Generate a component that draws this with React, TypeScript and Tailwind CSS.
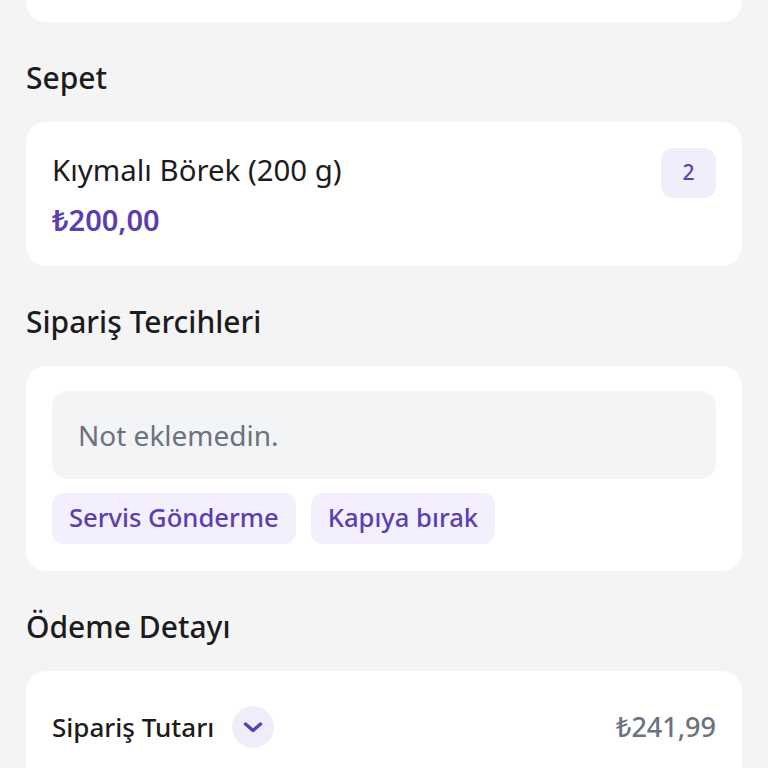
const font = { fontFamily: '"Noto Sans", "Open Sans", sans-serif' };

function Heading({ children }: { children: string }) {
  return (
    <h2 className="pt-[38px] pb-[26px] text-[30px] leading-[36px] font-medium text-[#1c1c1e]">
      {children}
    </h2>
  );
}

export default function App() {
  return (
    <div className="min-h-screen bg-[#f4f4f5] px-[26px] overflow-hidden" style={font}>
      {/* önceki kart (üstte kesik) */}
      <div className="h-[22px] bg-white rounded-b-[20px]" />

      <Heading>Sepet</Heading>
      <div className="bg-white rounded-[20px] px-[26px] pt-[26px] pb-[28px] flex items-start justify-between">
        <div className="pt-[4px]">
          <p className="text-[29.4px] leading-[36px] text-[#1c1c1e]">Kıymalı Börek (200 g)</p>
          <p className="mt-[14px] text-[29px] leading-[36px] font-semibold text-[#5b3fb0]">₺200,00</p>
        </div>
        <div className="w-[55px] h-[50px] rounded-[12px] bg-[#f1eefb] flex items-center justify-center text-[21px] font-medium text-[#5b3fb0]">
          2
        </div>
      </div>

      <Heading>Sipariş Tercihleri</Heading>
      <div className="bg-white rounded-[20px] px-[26px] pt-[25px] pb-[27px]">
        <div className="h-[88px] rounded-[16px] bg-[#f3f4f6] px-[26px] flex items-center text-[28px] text-[#6b7280]">
          Not eklemedin.
        </div>
        <div className="mt-[14px] flex gap-[15px]">
          <span className="h-[51px] px-[17px] rounded-[12px] bg-[#f3effd] flex items-center text-[25.6px] font-medium text-[#5b3fb0]">
            Servis Gönderme
          </span>
          <span className="h-[51px] px-[17px] rounded-[12px] bg-[#f3effd] flex items-center text-[25.6px] font-medium text-[#5b3fb0]">
            Kapıya bırak
          </span>
        </div>
      </div>

      <Heading>Ödeme Detayı</Heading>
      <div className="bg-white rounded-[20px] px-[26px] pt-[35px] pb-[40px]">
        <div className="flex items-center justify-between">
          <div className="flex items-center gap-[18px]">
            <span className="text-[26px] font-medium text-[#1c1c1e]">Sipariş Tutarı</span>
            <span className="w-[42px] h-[42px] rounded-full bg-[#efedfa] flex items-center justify-center">
              <svg width="20" height="11" viewBox="0 0 20 11" fill="none">
                <path d="M2.5 2 L10 8.5 L17.5 2" stroke="#5b3fb0" strokeWidth="3.4" strokeLinecap="round" strokeLinejoin="round" />
              </svg>
            </span>
          </div>
          <span className="text-[27px] font-medium text-[#6b7280]">₺241,99</span>
        </div>
      </div>
    </div>
  );
}
